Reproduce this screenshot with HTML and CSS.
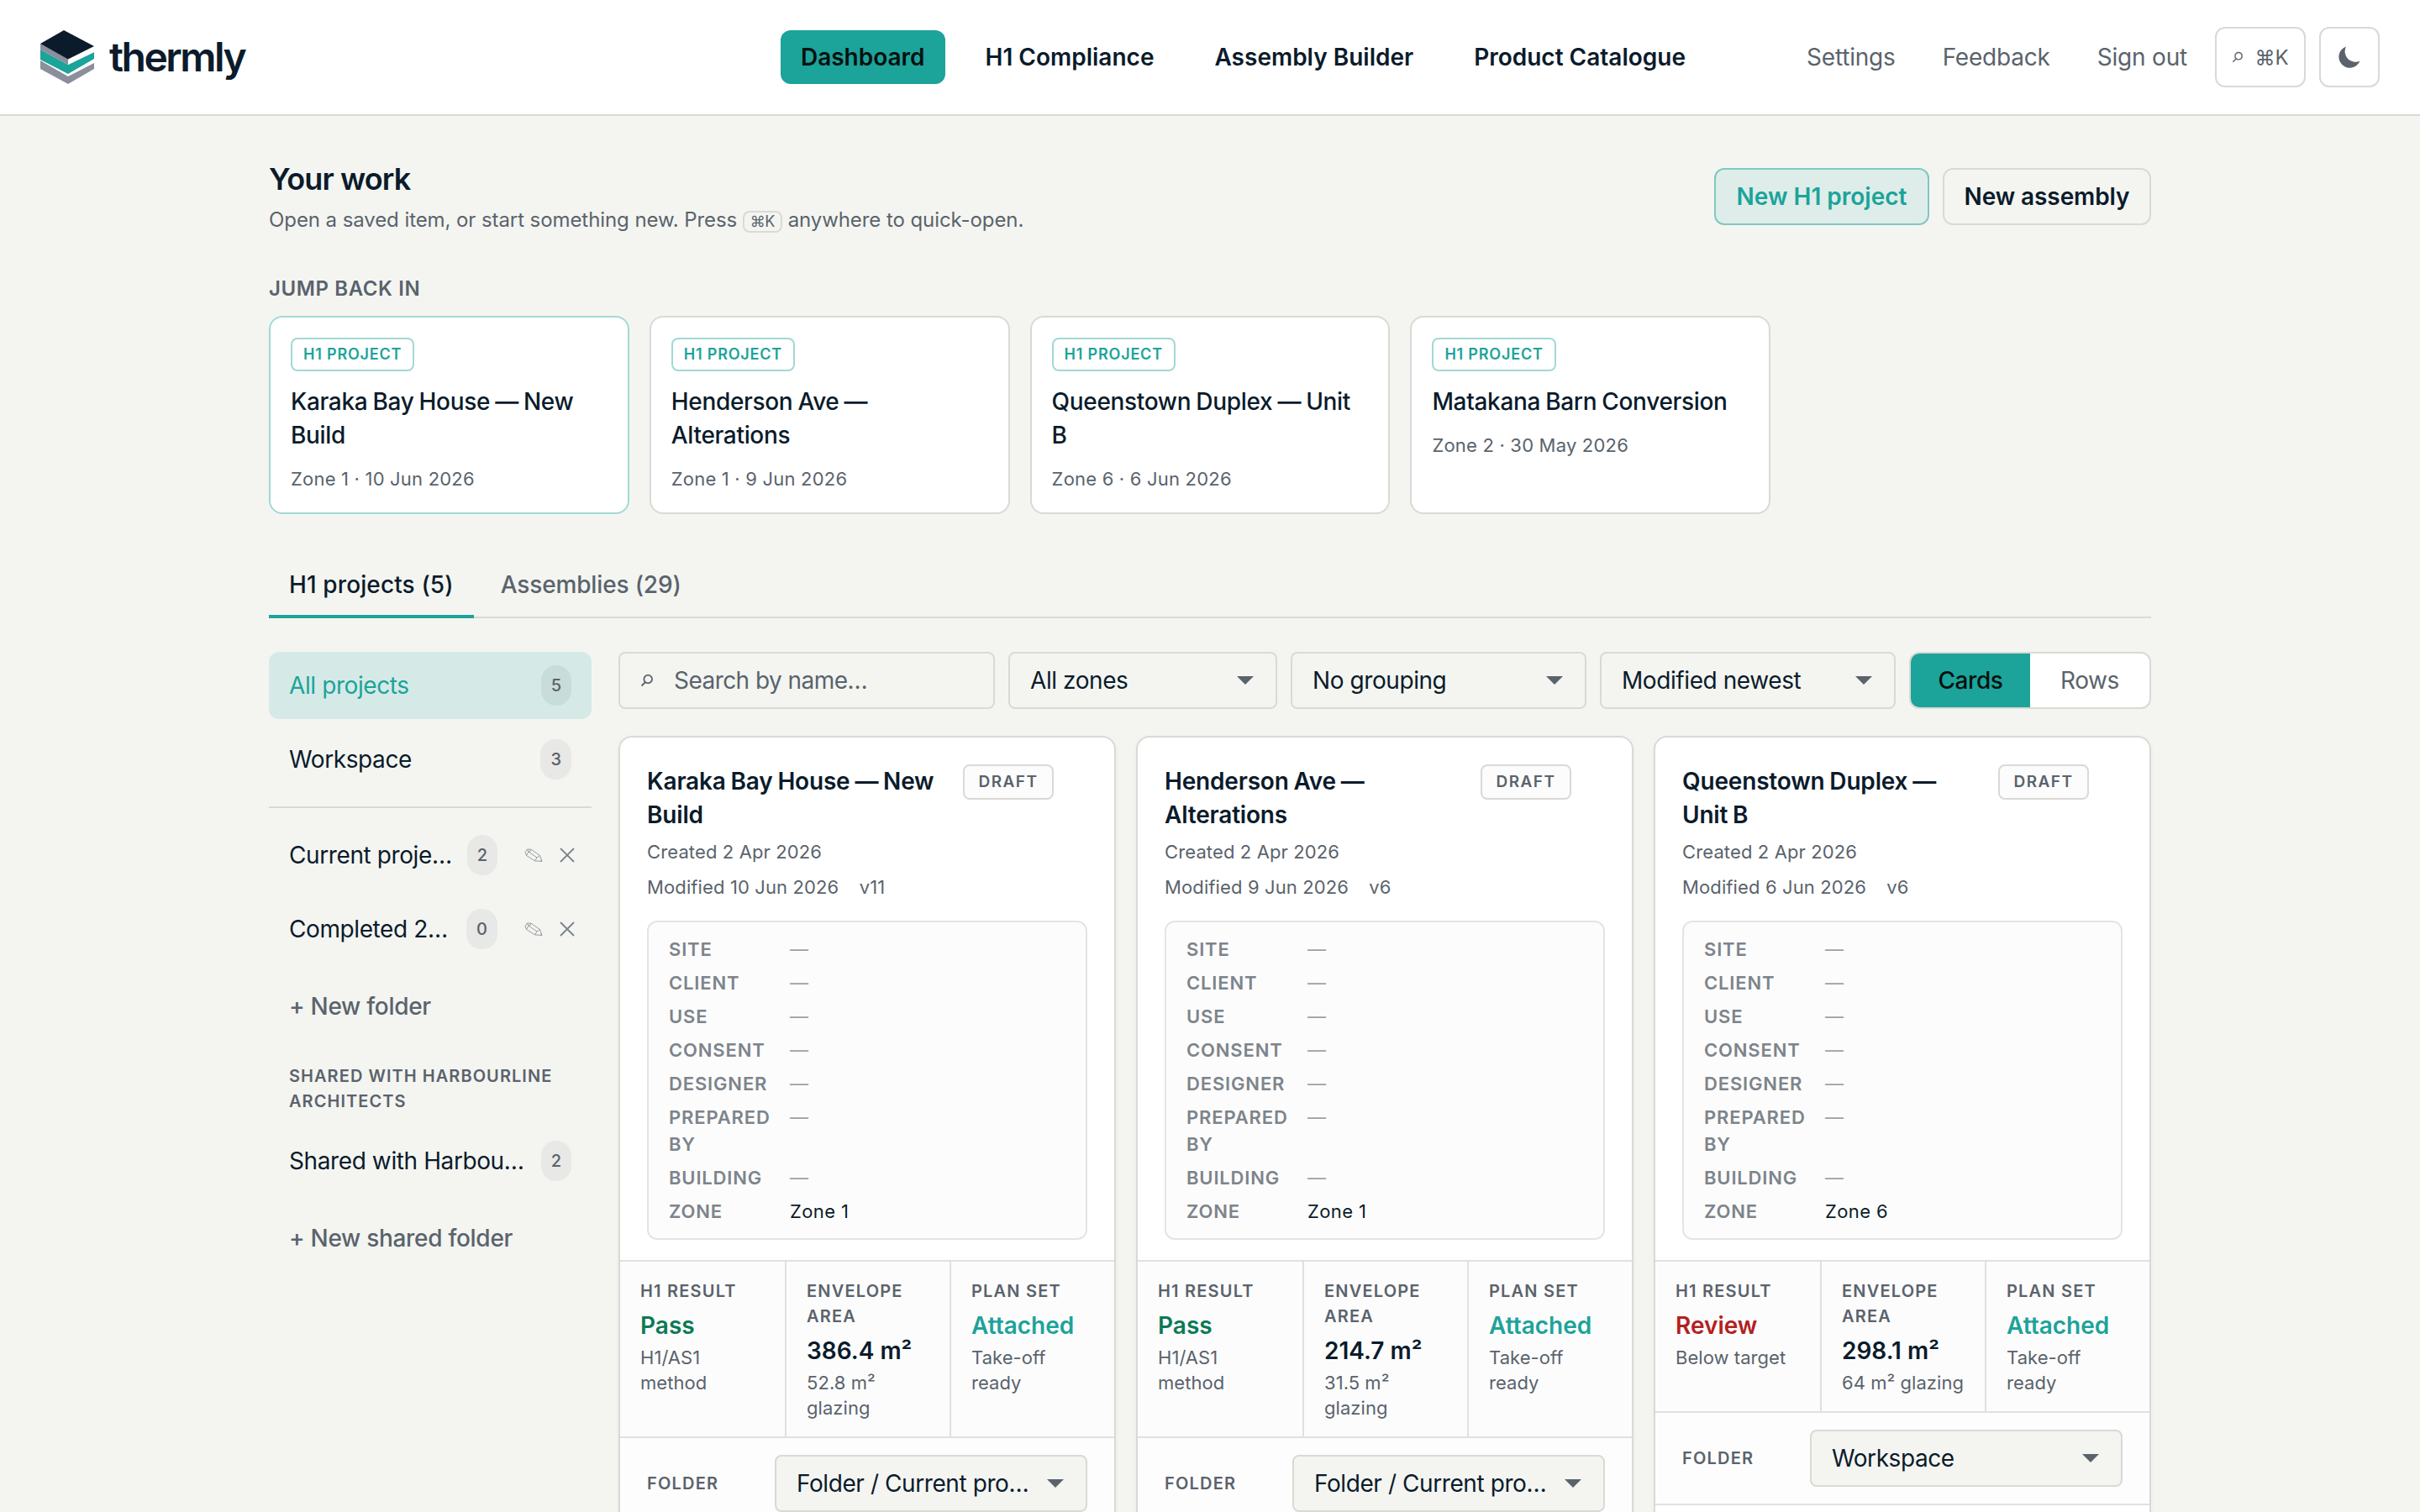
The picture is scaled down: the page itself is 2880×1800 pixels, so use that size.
FILE: index.html
```html
<!DOCTYPE html>
<html lang="en">

<head>
    <meta charset="UTF-8">
    <title>thermly - Dashboard</title>
    <link rel="stylesheet" href="styles.css">
</head>

<body>
    <!-- shared icons -->
    <svg class="defs" width="0" height="0">
        <symbol id="pencil" viewBox="0 0 22 17">
            <path d="M1 4.500 L3.500 1 L8 1.200 L18.500 8.500 L21 15.500 L12.500 14.800 L2.500 8.500 Z M3.500 1 L5 4 L2.500 8.500 M5 4 L15 11 L18.500 8.500 M15 11 L12.500 14.800 M8 1.200 L7 3.500 L5 4 M19.500 15.300 L20.300 13.600" />
        </symbol>
        <symbol id="cross" viewBox="0 0 18 18">
            <path d="M1 1 L17 17 M17 1 L1 17" />
        </symbol>
        <symbol id="search" viewBox="0 0 16 16">
            <path d="M6 10 L1.5 14.5 M14 6.5 A4.8 4.8 0 1 1 4.4 6.5 A4.8 4.8 0 1 1 14 6.5" />
        </symbol>
    </svg>

    <header class="topbar">
        <a class="brand">
            <svg class="logo" viewBox="0 0 64 64">
                <path fill="#8b8f9b" d="M0 35 L33 53 L64 38 V46 L33 64 L0 46 Z" />
                <path fill="#fff" d="M0 34 L33 52 L64 35 V39 L33 55 L0 36 Z" />
                <path fill="#1ca39a" d="M0 23 L33 41 L64 26 V34 L33 52 L0 35 Z" />
                <path fill="#fff" d="M33 34 L64 19 V26 L33 41 Z" />
                <path fill="#8b8f9b" d="M0 16 L33 34 V41 L0 23 Z" />
                <path fill="#0b1b2b" d="M28 0 L64 19 L33 34.500 L0 16 Z" />
            </svg>
            <span class="brand-name">thermly</span>
        </a>
        <nav class="main-nav">
            <a class="active">Dashboard</a>
            <a>H1 Compliance</a>
            <a>Assembly Builder</a>
            <a>Product Catalogue</a>
        </nav>
        <div class="tools">
            <a>Settings</a>
            <a>Feedback</a>
            <a>Sign out</a>
            <button class="icon-btn quick"><svg class="icon-search"><use href="#search" /></svg><span>⌘K</span></button>
            <button class="icon-btn theme">
                <svg class="moon" viewBox="0 0 26 26"><path d="M9 0.500 A13 13 0 1 0 25.500 17.500 A12.500 12.500 0 0 1 9 0.500 Z" /></svg>
            </button>
        </div>
    </header>

    <main class="container">
        <div class="page-head">
            <div>
                <h1>Your work</h1>
                <p class="lead">Open a saved item, or start something new. Press <kbd>⌘K</kbd> anywhere to quick-open.</p>
            </div>
            <div class="actions">
                <button class="btn primary">New H1 project</button>
                <button class="btn">New assembly</button>
            </div>
        </div>

        <h2 class="section-label">Jump back in</h2>
        <div class="recent">
            <div class="recent-card current">
                <span class="tag">H1 PROJECT</span>
                <h3>Karaka Bay House — New Build</h3>
                <p>Zone 1 · 10 Jun 2026</p>
            </div>
            <div class="recent-card">
                <span class="tag">H1 PROJECT</span>
                <h3>Henderson Ave — Alterations</h3>
                <p>Zone 1 · 9 Jun 2026</p>
            </div>
            <div class="recent-card">
                <span class="tag">H1 PROJECT</span>
                <h3>Queenstown Duplex — Unit B</h3>
                <p>Zone 6 · 6 Jun 2026</p>
            </div>
            <div class="recent-card">
                <span class="tag">H1 PROJECT</span>
                <h3>Matakana Barn Conversion</h3>
                <p>Zone 2 · 30 May 2026</p>
            </div>
        </div>

        <div class="tabs">
            <a class="tab active">H1 projects (5)</a>
            <a class="tab">Assemblies (29)</a>
        </div>

        <div class="layout">
            <aside class="sidebar">
                <div class="folder active"><span class="name">All projects</span><span class="count">5</span></div>
                <div class="folder"><span class="name">Workspace</span><span class="count">3</span></div>
                <hr>
                <div class="folder editable">
                    <span class="name">Current proje…</span><span class="count">2</span>
                    <svg class="edit"><use href="#pencil" /></svg><svg class="remove"><use href="#cross" /></svg>
                </div>
                <div class="folder editable">
                    <span class="name">Completed 2…</span><span class="count">0</span>
                    <svg class="edit"><use href="#pencil" /></svg><svg class="remove"><use href="#cross" /></svg>
                </div>
                <div class="new-folder">+ New folder</div>
                <h4>Shared with Harbourline Architects</h4>
                <div class="folder"><span class="name">Shared with Harbou…</span><span class="count">2</span></div>
                <div class="new-folder">+ New shared folder</div>
            </aside>

            <section class="content">
                <div class="toolbar">
                    <div class="search"><svg class="icon-search"><use href="#search" /></svg><span>Search by name…</span></div>
                    <div class="select zones"><span>All zones</span></div>
                    <div class="select"><span>No grouping</span></div>
                    <div class="select"><span>Modified newest</span></div>
                    <div class="toggle">
                        <span class="on">Cards</span>
                        <span>Rows</span>
                    </div>
                </div>

                <div class="cards">
                    <article class="card">
                        <div class="card-body">
                            <div class="card-head">
                                <h3>Karaka Bay House — New Build</h3>
                                <span class="status">DRAFT</span>
                            </div>
                            <p class="date">Created 2 Apr 2026</p>
                            <p class="date">Modified 10 Jun 2026 <span class="version">v11</span></p>
                            <dl class="meta">
                                <dt>Site</dt><dd>—</dd>
                                <dt>Client</dt><dd>—</dd>
                                <dt>Use</dt><dd>—</dd>
                                <dt>Consent</dt><dd>—</dd>
                                <dt>Designer</dt><dd>—</dd>
                                <dt>Prepared by</dt><dd>—</dd>
                                <dt>Building</dt><dd>—</dd>
                                <dt>Zone</dt><dd class="filled">Zone 1</dd>
                            </dl>
                        </div>
                        <div class="stats">
                            <div class="stat">
                                <h5>H1 result</h5>
                                <strong class="pass">Pass</strong>
                                <p>H1/AS1 method</p>
                            </div>
                            <div class="stat">
                                <h5>Envelope area</h5>
                                <strong>386.4 m²</strong>
                                <p>52.8 m² glazing</p>
                            </div>
                            <div class="stat">
                                <h5>Plan set</h5>
                                <strong class="attached">Attached</strong>
                                <p>Take-off ready</p>
                            </div>
                        </div>
                        <div class="folder-row">
                            <h5>Folder</h5>
                            <div class="select"><span>Folder / Current pro…</span></div>
                        </div>
                    </article>

                    <article class="card">
                        <div class="card-body">
                            <div class="card-head">
                                <h3>Henderson Ave — Alterations</h3>
                                <span class="status">DRAFT</span>
                            </div>
                            <p class="date">Created 2 Apr 2026</p>
                            <p class="date">Modified 9 Jun 2026 <span class="version">v6</span></p>
                            <dl class="meta">
                                <dt>Site</dt><dd>—</dd>
                                <dt>Client</dt><dd>—</dd>
                                <dt>Use</dt><dd>—</dd>
                                <dt>Consent</dt><dd>—</dd>
                                <dt>Designer</dt><dd>—</dd>
                                <dt>Prepared by</dt><dd>—</dd>
                                <dt>Building</dt><dd>—</dd>
                                <dt>Zone</dt><dd class="filled">Zone 1</dd>
                            </dl>
                        </div>
                        <div class="stats">
                            <div class="stat">
                                <h5>H1 result</h5>
                                <strong class="pass">Pass</strong>
                                <p>H1/AS1 method</p>
                            </div>
                            <div class="stat">
                                <h5>Envelope area</h5>
                                <strong>214.7 m²</strong>
                                <p>31.5 m² glazing</p>
                            </div>
                            <div class="stat">
                                <h5>Plan set</h5>
                                <strong class="attached">Attached</strong>
                                <p>Take-off ready</p>
                            </div>
                        </div>
                        <div class="folder-row">
                            <h5>Folder</h5>
                            <div class="select"><span>Folder / Current pro…</span></div>
                        </div>
                    </article>

                    <article class="card">
                        <div class="card-body">
                            <div class="card-head">
                                <h3>Queenstown Duplex — Unit B</h3>
                                <span class="status">DRAFT</span>
                            </div>
                            <p class="date">Created 2 Apr 2026</p>
                            <p class="date">Modified 6 Jun 2026 <span class="version">v6</span></p>
                            <dl class="meta">
                                <dt>Site</dt><dd>—</dd>
                                <dt>Client</dt><dd>—</dd>
                                <dt>Use</dt><dd>—</dd>
                                <dt>Consent</dt><dd>—</dd>
                                <dt>Designer</dt><dd>—</dd>
                                <dt>Prepared by</dt><dd>—</dd>
                                <dt>Building</dt><dd>—</dd>
                                <dt>Zone</dt><dd class="filled">Zone 6</dd>
                            </dl>
                        </div>
                        <div class="stats">
                            <div class="stat">
                                <h5>H1 result</h5>
                                <strong class="review">Review</strong>
                                <p>Below target</p>
                            </div>
                            <div class="stat">
                                <h5>Envelope area</h5>
                                <strong>298.1 m²</strong>
                                <p>64 m² glazing</p>
                            </div>
                            <div class="stat">
                                <h5>Plan set</h5>
                                <strong class="attached">Attached</strong>
                                <p>Take-off ready</p>
                            </div>
                        </div>
                        <div class="folder-row">
                            <h5>Folder</h5>
                            <div class="select"><span>Workspace</span></div>
                        </div>
                    </article>
                </div>
            </section>
        </div>
    </main>
</body>

</html>
```
FILE: styles.css
```css
* {
    box-sizing: border-box;
}

html {
    height: 100%;
    overflow: hidden;
}

body {
    margin: 0;
    height: 100%;
    overflow: hidden;
    font-family: 'Inter', sans-serif;
    font-size: 28px;
    line-height: 40px;
    background-color: #f4f5f1;
    color: #0b1b2b;
}

h1, h2, h3, h4, h5, p, dl, dd {
    margin: 0;
}

button {
    font-family: inherit;
    cursor: pointer;
}

.defs {
    position: absolute;
}

/* top bar */
.topbar {
    display: flex;
    align-items: center;
    height: 138px;
    padding: 0 48px;
    background-color: #fff;
    border-bottom: 2px solid #d9dad6;
}

.brand {
    display: flex;
    align-items: center;
    gap: 18px;
}

.logo {
    width: 64px;
    height: 64px;
}

.brand-name {
    font-size: 48px;
    font-weight: 600;
    letter-spacing: -2.5px;
}

.main-nav {
    display: flex;
    gap: 24px;
    margin-left: auto;
    margin-right: 120px;
}

.main-nav a {
    padding: 12px 24px;
    font-weight: 600;
    border-radius: 12px;
}

.main-nav .active {
    background-color: #1ca39a;
    color: #06100f;
}

.tools {
    display: flex;
    align-items: center;
    color: #5a636c;
}

.tools a {
    margin-right: 56px;
    letter-spacing: -0.2px;
}

.tools a:nth-of-type(3) {
    margin-right: 33px;
}

.icon-btn {
    display: flex;
    align-items: center;
    justify-content: center;
    height: 72px;
    background: none;
    border: 2px solid #d9dad6;
    border-radius: 12px;
    color: #5a636c;
}

.quick {
    width: 108px;
    padding: 0;
    gap: 13px;
    font-size: 24px;
    margin-right: 16px;
}

.theme {
    width: 72px;
    padding: 0;
}

.icon-search {
    width: 14px;
    height: 14px;
    fill: none;
    stroke: #5a636c;
    stroke-width: 1.6;
}

.moon {
    width: 26px;
    height: 26px;
    fill: #5a636c;
}

/* page heading */
.container {
    width: 2240px;
    margin: 0 auto;
    padding-top: 52px;
}

.page-head {
    display: flex;
    justify-content: space-between;
}

h1 {
    font-size: 36px;
    line-height: 46px;
    font-weight: 600;
    letter-spacing: -0.9px;
}

.lead {
    font-size: 24px;
    line-height: 36px;
    margin-top: 8px;
    letter-spacing: -0.08px;
    color: #5a636c;
}

kbd {
    display: inline-block;
    padding: 0 7px;
    font-family: inherit;
    font-size: 18px;
    line-height: 22px;
    letter-spacing: -0.5px;
    border: 2px solid #d9dad6;
    border-radius: 8px;
}

.actions {
    display: flex;
    gap: 16px;
    padding-top: 10px;
}

.btn {
    width: 248px;
    height: 68px;
    padding: 0;
    font-size: 28px;
    font-weight: 600;
    letter-spacing: -0.1px;
    color: #0b1b2b;
    background: none;
    border: 2px solid #d9dad6;
    border-radius: 12px;
}

.btn.primary {
    width: 256px;
    letter-spacing: 0;
    color: #1ca39a;
    background-color: #deede9;
    border-color: #7fc8c2;
}

/* recent items */
.section-label {
    margin-top: 46px;
    font-size: 24px;
    line-height: 36px;
    font-weight: 600;
    letter-spacing: 0.6px;
    text-transform: uppercase;
    color: #5a636c;
}

.recent {
    display: grid;
    grid-template-columns: repeat(5, 1fr);
    gap: 24px;
    margin-top: 14px;
}

.recent-card {
    min-height: 236px;
    padding: 24px;
    background-color: #fff;
    border: 2px solid #d9dad6;
    border-radius: 16px;
}

.recent-card.current {
    border-color: #a2d9d4;
}

.tag {
    display: block;
    width: fit-content;
    height: 40px;
    padding: 0 13px;
    font-size: 18px;
    line-height: 36px;
    font-weight: 600;
    letter-spacing: 0.8px;
    color: #1ca39a;
    border: 2px solid #a2d9d4;
    border-radius: 8px;
}

.recent-card h3 {
    margin-top: 16px;
    font-size: 28px;
    font-weight: 500;
    letter-spacing: -0.33px;
    word-spacing: -1px;
}

.recent-card p {
    margin-top: 16px;
    font-size: 22px;
    line-height: 32px;
    letter-spacing: 0.2px;
    color: #5a636c;
}

/* tabs */
.tabs {
    display: flex;
    gap: 8px;
    height: 76px;
    margin-top: 48px;
    margin-bottom: 40px;
    border-bottom: 2px solid #d9dad6;
}

.tab {
    height: 76px;
    padding: 16px 24px 0;
    font-weight: 500;
    letter-spacing: -0.15px;
    color: #5a636c;
}

.tab.active {
    letter-spacing: 0.12px;
    color: #0b1b2b;
    border-bottom: 4px solid #1ca39a;
}

.layout {
    display: grid;
    grid-template-columns: 384px 1fr;
    gap: 32px;
}

/* folders */
.sidebar hr {
    margin: 16px 0;
    border: none;
    border-top: 2px solid #d9dad6;
}

.folder {
    display: flex;
    align-items: center;
    height: 80px;
    padding: 0 24px;
    border-radius: 12px;
}

.folder + .folder {
    margin-top: 8px;
}

.folder.active {
    color: #1ca39a;
    background-color: #d5eae6;
}

.folder .name {
    flex: 1;
    letter-spacing: -0.4px;
    white-space: nowrap;
}

.count {
    padding: 0 12px;
    font-size: 20px;
    line-height: 48px;
    font-weight: 500;
    border-radius: 18px;
    background-color: #e8e8e6;
    color: #5a636c;
}

.folder.active .count {
    background-color: #c8dcd9;
}

.folder.editable {
    padding-right: 20px;
}

.edit, .remove {
    flex: none;
    width: 22px;
    height: 17px;
    fill: none;
    stroke: #8d9399;
    stroke-width: 0.9;
}

.edit {
    margin-left: 32px;
}

.remove {
    width: 18px;
    height: 18px;
    margin-left: 20px;
    stroke: #7b838a;
    stroke-width: 1.8;
}

.new-folder {
    height: 80px;
    margin-top: 12px;
    padding: 20px 24px;
    font-weight: 500;
    letter-spacing: -0.3px;
    color: #5a636c;
}

.sidebar h4 {
    margin: 28px 0 16px;
    padding: 0 24px;
    font-size: 20px;
    line-height: 30px;
    font-weight: 600;
    letter-spacing: 1.05px;
    text-transform: uppercase;
    color: #5a636c;
}

/* toolbar */
.toolbar {
    display: flex;
    gap: 16px;
    margin-bottom: 32px;
    letter-spacing: -0.42px;
}

.search {
    display: flex;
    align-items: center;
    gap: 24px;
    width: 448px;
    height: 68px;
    padding: 0 24px;
    letter-spacing: -0.55px;
    color: #5a636c;
    border: 2px solid #d9dad6;
    border-radius: 8px;
}

.search .icon-search {
    width: 16px;
    height: 16px;
    stroke-width: 1.8;
}

.select {
    display: flex;
    align-items: center;
    justify-content: space-between;
    width: 352px;
    height: 68px;
    padding: 0 26px 0 24px;
    letter-spacing: -0.42px;
    white-space: nowrap;
    background-color: #f4f5f1;
    border: 2px solid #d9dad6;
    border-radius: 8px;
}

.select::after {
    content: '';
    flex: none;
    border: 10px solid transparent;
    border-top-color: #5a636c;
    border-bottom: none;
}

.select.zones {
    width: 320px;
}

.toggle {
    display: flex;
    width: 288px;
    height: 68px;
    overflow: hidden;
    line-height: 64px;
    text-align: center;
    color: #5a636c;
    background-color: #fff;
    border: 2px solid #d9dad6;
    border-radius: 12px;
}

.toggle span {
    flex: 1;
}

.toggle .on {
    font-weight: 500;
    color: #06100f;
    background-color: #1ca39a;
}

/* project cards */
.cards {
    display: grid;
    grid-template-columns: repeat(3, 1fr);
    gap: 24px;
}

.card {
    min-height: 1040px;
    background-color: #fff;
    border: 2px solid #d9dad6;
    border-radius: 16px;
    box-shadow: 0 2px 6px rgba(11, 27, 43, 0.04);
}

.card-body {
    padding: 32px 32px 24px;
}

.card-head {
    display: flex;
    align-items: flex-start;
    gap: 16px;
    padding-right: 40px;
    margin-bottom: 8px;
}

.card-head h3 {
    flex: 1;
    font-size: 28px;
    font-weight: 600;
    letter-spacing: -0.18px;
    word-spacing: -1px;
}

.status {
    width: 108px;
    height: 42px;
    font-size: 19px;
    line-height: 38px;
    font-weight: 600;
    letter-spacing: 1.5px;
    text-align: center;
    color: #5a636c;
    background-color: #fcfcfc;
    border: 2px solid #d9dad6;
    border-radius: 8px;
}

.date {
    font-size: 22px;
    line-height: 32px;
    letter-spacing: 0.12px;
    color: #5a636c;
}

.date + .date {
    margin-top: 10px;
}

.version {
    margin-left: 18px;
}

.meta {
    display: grid;
    grid-template-columns: 120px 1fr;
    gap: 8px 24px;
    margin-top: 24px;
    padding: 16px 24px;
    font-size: 22px;
    line-height: 32px;
    background-color: #fcfcfc;
    border: 2px solid #e4e5e3;
    border-radius: 12px;
}

.meta dt {
    font-weight: 600;
    letter-spacing: 0.85px;
    text-transform: uppercase;
    color: #7d848b;
}

.meta dd {
    letter-spacing: 0.4px;
    color: #9ca1a6;
}

.meta .filled {
    color: #0b1b2b;
}

.stats {
    display: grid;
    grid-template-columns: repeat(3, 1fr);
    background-color: #fcfcfc;
    border-top: 2px solid #e0e1df;
    border-bottom: 2px solid #e0e1df;
}

.stat {
    padding: 20px 16px 19px 24px;
}

.stat + .stat {
    border-left: 2px solid #e0e1df;
}

h5 {
    font-size: 20px;
    line-height: 30px;
    font-weight: 600;
    letter-spacing: 1.2px;
    text-transform: uppercase;
    color: #5a636c;
}

.stat strong {
    display: block;
    margin: 5px 0 2px;
    line-height: 42px;
    font-weight: 600;
    white-space: nowrap;
}

.stat p {
    font-size: 22px;
    line-height: 30px;
    letter-spacing: 0.05px;
    color: #5a636c;
}

.pass {
    color: #0b7a55;
}

.review {
    color: #b3201f;
}

.attached {
    color: #1ca39a;
}

.folder-row {
    display: flex;
    align-items: center;
    justify-content: space-between;
    padding: 20px 32px;
    background-color: #fdfdfd;
    border-bottom: 2px solid #e0e1df;
}

.folder-row .select {
    width: 372px;
}
```
